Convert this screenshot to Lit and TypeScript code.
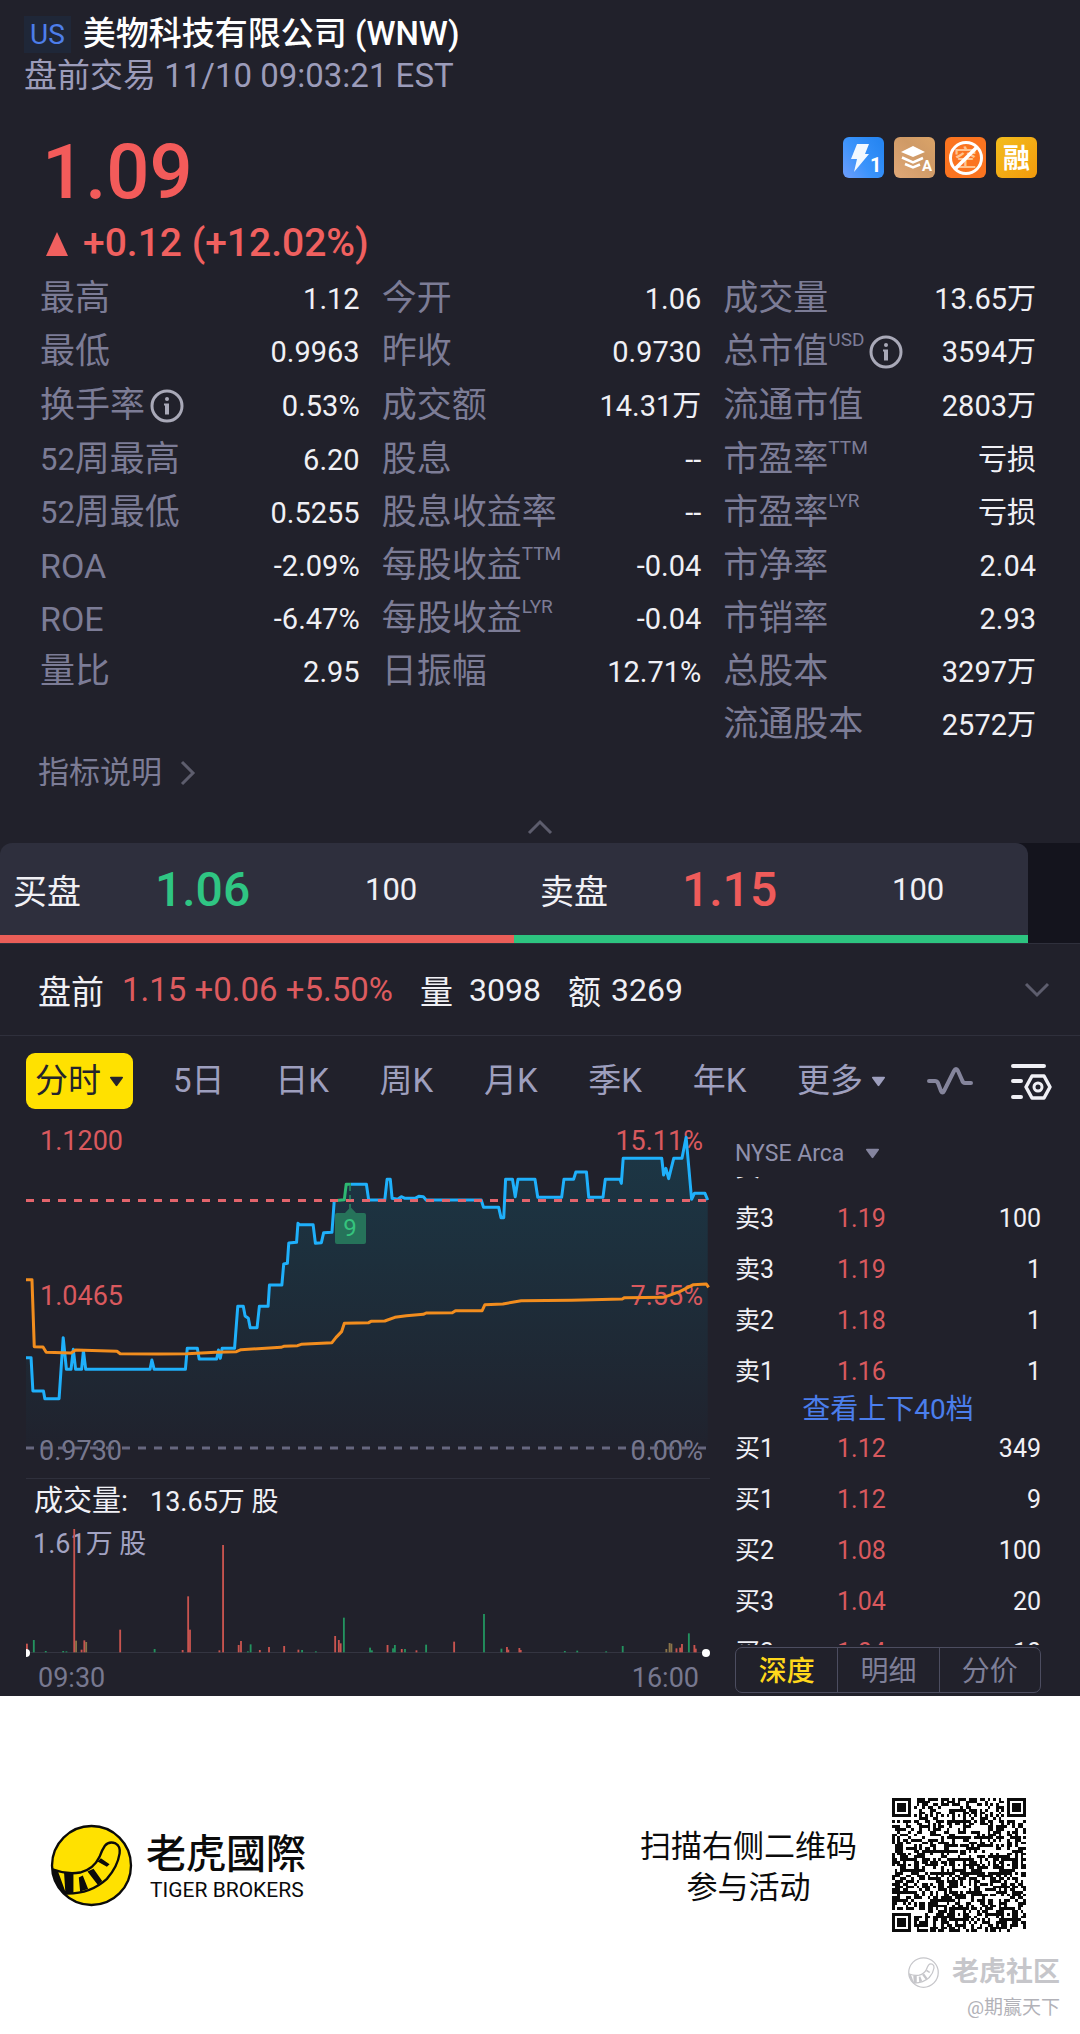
import { LitElement, html, svg, css, nothing } from "lit";
import { customElement, property, state } from "lit/decorators.js";
import { classMap } from "lit/directives/class-map.js";

interface Stat {
  label: string;
  value: string;
  prefix?: string;
  sup?: string;
  info?: boolean;
}

const STATS: Stat[][] = [
  [
    { label: "最高", value: "1.12" },
    { label: "最低", value: "0.9963" },
    { label: "换手率", value: "0.53%", info: true },
    { label: "周最高", prefix: "52", value: "6.20" },
    { label: "周最低", prefix: "52", value: "0.5255" },
    { label: "", prefix: "ROA", value: "-2.09%" },
    { label: "", prefix: "ROE", value: "-6.47%" },
    { label: "量比", value: "2.95" },
  ],
  [
    { label: "今开", value: "1.06" },
    { label: "昨收", value: "0.9730" },
    { label: "成交额", value: "14.31万" },
    { label: "股息", value: "--" },
    { label: "股息收益率", value: "--" },
    { label: "每股收益", sup: "TTM", value: "-0.04" },
    { label: "每股收益", sup: "LYR", value: "-0.04" },
    { label: "日振幅", value: "12.71%" },
  ],
  [
    { label: "成交量", value: "13.65万" },
    { label: "总市值", sup: "USD", info: true, value: "3594万" },
    { label: "流通市值", value: "2803万" },
    { label: "市盈率", sup: "TTM", value: "亏损" },
    { label: "市盈率", sup: "LYR", value: "亏损" },
    { label: "市净率", value: "2.04" },
    { label: "市销率", value: "2.93" },
    { label: "总股本", value: "3297万" },
    { label: "流通股本", value: "2572万" },
  ],
];

const PERIODS = ["5日", "日K", "周K", "月K", "季K", "年K"];

const ASKS = [
  ["卖4", "1.20", "1"],
  ["卖3", "1.19", "100"],
  ["卖3", "1.19", "1"],
  ["卖2", "1.18", "1"],
  ["卖1", "1.16", "1"],
];
const BIDS = [
  ["买1", "1.12", "349"],
  ["买1", "1.12", "9"],
  ["买2", "1.08", "100"],
  ["买3", "1.04", "20"],
  ["买3", "1.04", "10"],
];

// Intraday series, in plot units (x to the right, y downwards).
const PRICE_A =
  "57,773 68,773 72,873 95,873 98,896 129,896 138,713 145,808 155,808 160,748 165,808 178,808 182,752 187,808 327,808 331,780 336,808 404,808 408,745 430,745 434,777 472,777 476,750 480,775 484,745 511,745 518,619 530,619 534,648 541,655 545,683 560,683 565,619 584,619 587,555 614,555 618,492 626,490 629,429 646,427 649,370 652,374 682,374 687,430 700,428 705,398 723,397 728,302";
const PRICE_MARK = "728,302 750,299 754,253 764,253";
const PRICE_B =
  "764,253 798,253 803,300 838,300 843,238 850,238 854,295 866,298 874,290 882,295 904,295 912,289 922,290 928,300 1048,300 1053,322 1086,322 1091,353 1097,353 1101,238 1116,238 1122,290 1128,238 1165,238 1171,292 1223,292 1228,238 1249,238 1254,216 1277,216 1282,292 1313,292 1318,238 1350,238 1353,250 1357,175 1441,175 1445,225 1450,205 1456,236 1467,175 1485,175 1494,112 1506,298 1512,280 1535,280 1541,300";
const AVERAGE =
  "57,539 70,539 75,740 94,741 101,757 155,759 165,750 255,754 262,761 345,762 408,761 470,757 515,755 525,749 612,742 618,739 648,737 656,733 723,728 732,712 744,695 750,670 803,668 808,664 838,663 860,652 885,647 922,643 928,639 985,638 992,632 1050,632 1056,614 1095,612 1135,602 1245,601 1355,597 1360,593 1445,592 1480,575 1510,554 1538,552 1543,562";

// Volume bars: x, height, colour (r up, g down, o mixed).
const VOLUMES: [number, number, string][] = [
  [59, 26, "r"], [74, 37, "g"], [100, 4, "g"], [138, 4, "g"], [145, 3, "g"],
  [162, 370, "r"], [166, 35, "o"], [178, 8, "r"], [184, 36, "r"], [188, 31, "o"],
  [262, 68, "r"], [337, 10, "g"], [398, 7, "r"], [410, 168, "r"], [414, 68, "r"],
  [478, 6, "r"], [486, 322, "r"], [520, 22, "r"], [525, 34, "r"], [540, 3, "g"],
  [546, 24, "g"], [566, 7, "r"], [586, 16, "r"], [619, 19, "r"], [650, 8, "r"],
  [658, 7, "g"], [688, 3, "g"], [730, 49, "r"], [738, 37, "r"], [742, 27, "r"],
  [749, 104, "g"], [806, 14, "g"], [810, 6, "g"], [844, 22, "r"], [856, 12, "g"],
  [860, 22, "g"], [875, 10, "r"], [882, 10, "g"], [907, 6, "r"], [928, 23, "g"],
  [989, 32, "r"], [1054, 115, "g"], [1092, 11, "g"], [1104, 16, "r"], [1107, 8, "r"],
  [1131, 13, "r"], [1134, 7, "r"], [1230, 4, "g"], [1257, 5, "g"], [1320, 3, "g"],
  [1356, 19, "g"], [1451, 10, "o"], [1458, 28, "o"], [1462, 26, "o"], [1473, 12, "r"],
  [1481, 14, "r"], [1485, 25, "r"], [1500, 57, "g"], [1512, 22, "r"], [1515, 11, "r"],
];

// A 49-module code: finder, alignment and timing patterns around a seeded fill.
function codePath(): string {
  const n = 49;
  let seed = 20231110;
  const rand = () => {
    seed = (seed * 1103515245 + 12345) % 2147483648;
    return seed / 2147483648;
  };
  const ring = (dx: number, dy: number) => Math.max(Math.abs(dx), Math.abs(dy));
  const finders = [[3, 3], [n - 4, 3], [3, n - 4]];
  const aligns = [[24, 6], [6, 24], [24, 24], [42, 24], [24, 42], [42, 42]];
  let d = "";
  for (let y = 0; y < n; y++) {
    let run = 0;
    for (let x = 0; x <= n; x++) {
      let on = rand() < 0.53;
      if (x === 6 || y === 6) on = (x + y) % 2 === 0;
      for (const [cx, cy] of aligns) {
        const r = ring(x - cx, y - cy);
        if (r <= 2) on = r !== 1;
      }
      for (const [cx, cy] of finders) {
        const r = ring(x - cx, y - cy);
        if (r <= 4) on = r === 3 || r <= 1;
      }
      if (on && x < n) {
        run++;
      } else if (run) {
        d += `M${x - run} ${y}h${run}v1h-${run}z`;
        run = 0;
      }
    }
  }
  return d;
}
const CODE = codePath();

const infoIcon = html`<svg class="info" viewBox="0 0 34 34" aria-hidden="true">
  <circle cx="17" cy="17" r="15" fill="none" stroke="currentColor" stroke-width="3" />
  <circle cx="17" cy="10" r="2" fill="currentColor" />
  <path d="M14 14.5h5v11h-4v-9h-1z" fill="currentColor" />
</svg>`;

const triangle = (cls: string) => html`<svg class=${cls} viewBox="0 0 16 11" aria-hidden="true">
  <path d="M1 1.5q0-1 1-1h12q1 0 1 1L8.8 10q-.8 1-1.6 0z" fill="currentColor" />
</svg>`;

const tiger = (line: string, fill: string, width: number) => svg`
  <circle cx="184" cy="196" r="118" fill=${fill} stroke=${line} stroke-width=${width} />
  <path d="M70 208Q110 224 150 217Q190 208 208 170Q215 150 224 137Q236 122 256 130Q271 138 268 160Q262 200 230 236Q180 282 106 280"
    fill="none" stroke=${line} stroke-width=${width} stroke-linecap="round" />
  <path d="M66 206L84 214L108 280L96 278Q74 250 66 206z M102 217L130 219L130 279L106 279z M146 232L158 226L174 266L150 274z M172 214L190 206L216 242L203 254z M202 184L212 174L238 192L230 200z"
    fill=${line} />`;

@customElement("order-table")
class OrderTable extends LitElement {
  @property({ attribute: false }) rows: string[][] = [];

  static styles = css`
    :host { display: block; }
    .book { width: 100%; border-collapse: collapse; table-layout: fixed; font-size: 25px; line-height: 35px; }
    .cell { padding: 8px 0; font-weight: 400; text-align: left; }
    .level { color: #f0f0f5; }
    .price { color: #d9595e; }
    .size { color: #f0f0f5; text-align: right; }
  `;

  render() {
    return html`<table class="book">
      <tbody>
        ${this.rows.map(
          ([level, price, size]) => html`<tr>
            <th class="cell level" scope="row">${level}</th>
            <td class="cell price">${price}</td>
            <td class="cell size">${size}</td>
          </tr>`
        )}
      </tbody>
    </table>`;
  }
}

@customElement("intraday-chart")
class IntradayChart extends LitElement {
  static styles = css`
    :host { display: block; }
    .chart { display: block; width: 100%; height: auto; }
    .axis { font-size: 27px; fill: #d9595e; }
    .muted { fill: #77788f; }
    .bright { fill: #f0f0f5; }
    .head { font-size: 29px; }
    .soft { fill: #a3a3c2; }
    .end { text-anchor: end; }
    .mid { text-anchor: middle; }
    .badge { font-size: 24px; fill: #35c47d; }
    .line { fill: none; stroke-width: 3; stroke-linejoin: round; vector-effect: non-scaling-stroke; }
    .price { stroke: #1fb0fb; }
    .mark { stroke: #2eb872; }
    .avg { stroke: #f28d1e; }
    .dash { stroke-width: 3; stroke-dasharray: 8 8; }
    .r { fill: #c9544f; }
    .g { fill: #23935f; }
    .o { fill: #8a7449; }
  `;

  render() {
    return html`<svg class="chart" viewBox="0 0 684 576" role="img">
      <defs>
        <linearGradient id="shade" x1="0" y1="0" x2="0" y2="1">
          <stop offset="0" stop-color="#1c3746" />
          <stop offset="0.4" stop-color="#1d2f3c" />
          <stop offset="1" stop-color="#20222d" />
        </linearGradient>
      </defs>
      <svg x="0" y="0" width="684" height="360" viewBox="57 60 1489 1080" preserveAspectRatio="none">
        <polygon points="${PRICE_A} ${PRICE_MARK} ${PRICE_B} 1541,1044 57,1044" fill="url(#shade)" />
      </svg>
      <text class="axis" x="14" y="30">1.1200</text>
      <text class="axis end" x="677" y="30">15.11%</text>
      <text class="axis" x="14" y="185">1.0465</text>
      <text class="axis end" x="677" y="185">7.55%</text>
      <text class="axis muted" x="13" y="340">0.9730</text>
      <text class="axis muted end" x="677" y="340">0.00%</text>
      <svg x="0" y="0" width="684" height="360" viewBox="57 60 1489 1080" preserveAspectRatio="none">
        <polyline class="line price" points=${PRICE_A} />
        <polyline class="line price" points=${PRICE_B} />
        <polyline class="line mark" points=${PRICE_MARK} />
        <polyline class="line avg" points=${AVERAGE} />
      </svg>
      <line class="dash" x1="0" x2="682" y1="80.500" y2="80.500" stroke="#e3646c" />
      <line class="dash" x1="0" x2="682" y1="328" y2="328" stroke="#66677f" />
      <path d="M324 66V90" stroke="#2eb872" stroke-width="1" stroke-dasharray="5 4" />
      <path d="M311 93h8l5.500-6 5.500 6h8q2 0 2 2v27q0 2-2 2h-27q-2 0-2-2V95q0-2 2-2z" fill="#26735a" />
      <text class="badge mid" x="324" y="116">9</text>
      <path d="M0 358.500H684" stroke="#2f303c" />
      <text class="head bright" x="8" y="391">成交量:</text>
      <text class="axis bright" x="124" y="391">13.65万 股</text>
      <text class="axis soft" x="7" y="433">1.61万 股</text>
      <svg x="0" y="400" width="684" height="140" viewBox="57 240 1489 420" preserveAspectRatio="none">
        <rect x="57" y="636" width="1486" height="3" fill="#343541" />
        ${VOLUMES.map(
          ([x, h, c]) => svg`<rect class=${c} x=${x - 2} y=${637 - h} width="4" height=${h} />`
        )}
      </svg>
      <path d="M0 529a4 4 0 0 1 0 8z" fill="#fff" />
      <circle cx="680" cy="533" r="4" fill="#fff" />
      <text class="axis muted" x="12" y="567">09:30</text>
      <text class="axis muted end" x="673" y="567">16:00</text>
    </svg>`;
  }
}

@customElement("app-root")
class AppRoot extends LitElement {
  @state() private period = "分时";
  @state() private panel = "深度";

  static styles = css`
    :host {
      display: block;
      background: #21212b;
      color: #f0f0f5;
      font-family: Roboto, "Noto Sans CJK SC", sans-serif;
      font-size: 33px;
    }
    button, select { font: inherit; color: inherit; background: none; border: 0; padding: 0; margin: 0; }
    .flag-row { display: flex; align-items: center; gap: 12px; height: 40px; padding: 14px 24px 0; }
    .flag { padding: 0 6px; background: #1f2738; color: #4d7eea; font-size: 28px; line-height: 37px; }
    .name { margin: 0; font-size: 33px; font-weight: 500; line-height: 40px; color: #fff; }
    .session { margin: 0; padding: 0 24px; line-height: 44px; color: #9c9cba; }
    .quote { display: flex; align-items: flex-start; justify-content: space-between; padding: 31px 43px 0 42px; }
    .last { font-size: 76px; font-weight: 500; line-height: 86px; color: #f35b5a; }
    .change { display: flex; align-items: center; gap: 15px; padding: 0 46px; font-size: 39px; font-weight: 500; line-height: 57px; color: #f0605f; }
    .up { width: 22px; height: 24px; }
    .tags { display: flex; gap: 10px; padding-top: 8px; }
    .tag { width: 41px; height: 41px; }
    .tag-text { font-weight: 700; fill: #fff; }
    .stats {
      display: grid;
      grid-auto-flow: column;
      grid-template-columns: 319fr 319fr 312fr;
      column-gap: 22px;
      margin: 0;
      padding: 0 44px 0 40px;
    }
    .stat-col { display: grid; grid-template-rows: 53px 54px 54px; grid-auto-rows: 53px; align-content: start; margin: 0; }
    .stat { display: flex; align-items: center; justify-content: space-between; }
    .label { display: flex; align-items: center; font-size: 35px; line-height: 44px; color: #7c7c96; white-space: nowrap; }
    .digits { font-size: 31px; }
    .code { font-size: 34px; }
    .sup { align-self: flex-start; font-size: 19px; line-height: 20px; }
    .info { width: 34px; height: 34px; margin-left: 5px; color: #a9a9b8; }
    .value { margin: 0; font-size: 29px; line-height: 44px; white-space: nowrap; }
    .help { display: inline-flex; align-items: center; gap: 18px; padding: 0 38px; font-size: 31px; line-height: 44px; color: #7c7c96; text-decoration: none; }
    .chev { width: 16px; height: 26px; color: #5d5d6d; }
    .fold { display: flex; justify-content: center; width: 100%; height: 48px; padding-top: 24px; box-sizing: border-box; }
    .vee { width: 26px; height: 16px; color: #5d5d6d; }
    .sides { display: grid; grid-template-columns: 1fr 1fr; padding-right: 52px; background: linear-gradient(90deg, #21212b 50%, #14141d 50%); }
    .side { display: grid; grid-template-columns: 142px 210px 1fr; align-items: center; height: 92px; padding-left: 13px; background: #2e2f3d; border-bottom: 8px solid #ea5e58; }
    .side.bid { border-top-left-radius: 12px; }
    .side.ask { padding-left: 26px; border-top-right-radius: 12px; border-bottom-color: #2dc480; }
    .side-name { font-size: 34px; }
    .side-price { font-size: 48px; font-weight: 500; }
    .bid .side-price { color: #2fc583; }
    .ask .side-price { color: #ef5b5a; }
    .side-size { font-size: 31px; }
    .pre { display: flex; align-items: center; height: 91px; padding: 0 30px 0 38px; border: solid #2f303c; border-width: 1px 0; }
    .pre-move { margin-left: 18px; color: #dd5b5f; }
    .pre-vol { margin-left: 27px; }
    .pre-fig { margin-left: 16px; font-size: 32px; }
    .pre-amt { margin-left: 27px; }
    .pre-fig.near { margin-left: 10px; }
    .pre-open { margin-left: auto; display: flex; }
    .tabs { display: flex; align-items: center; padding: 17px 28px 11px 26px; color: #9e9fbe; }
    .tab { display: flex; align-items: center; gap: 8px; line-height: 56px; white-space: nowrap; }
    .tab.on { height: 56px; padding: 0 9px; border-radius: 9px; background: #ffe100; color: #24242c; }
    .periods { display: flex; flex: 1; justify-content: space-between; margin: 0 41px 0 40px; }
    .tri { width: 15px; height: 11px; }
    .wave { width: 46px; height: 32px; margin-right: 37px; display: block; color: #85859c; }
    .gear { width: 42px; height: 38px; display: block; color: #f0f0f5; }
    .market { display: grid; grid-template-columns: 1fr 306px; column-gap: 25px; padding: 0 39px 0 26px; }
    .depth { display: flex; flex-direction: column; padding: 16px 0 3px; }
    .venue { display: flex; align-items: center; gap: 20px; height: 34px; margin-bottom: 7px; color: #85859f; font-size: 23px; }
    .venue-pick { appearance: none; color: #9090ac; }
    .asks { display: flex; flex-direction: column; justify-content: flex-end; height: 220px; overflow: hidden; }
    .more { align-self: center; font-size: 28px; line-height: 26px; color: #4b7eec; text-decoration: none; }
    .bids { flex: 1 1 0; min-height: 0; overflow: hidden; }
    .modes { display: grid; grid-template-columns: repeat(3, 1fr); height: 46px; margin-top: 2px; box-sizing: border-box; border: 1px solid #4c4d60; border-radius: 7px; }
    .mode { padding-top: 4px; font-size: 28px; line-height: 40px; color: #7e7f98; }
    .mode + .mode { border-left: 1px solid #4c4d60; }
    .mode.on { color: #ffd81c; font-weight: 500; }
    .foot { position: relative; display: flex; align-items: center; min-height: 338px; box-sizing: border-box; padding: 0 54px 0 50px; background: #fff; color: #0b0b0b; }
    .logo { width: 83px; height: 83px; }
    .brand { display: flex; flex-direction: column; margin-left: 13px; padding-top: 6px; font-family: Roboto, "Noto Sans CJK TC", sans-serif; }
    .brand-name { font-size: 40px; font-weight: 500; line-height: 44px; }
    .brand-sub { padding-left: 4px; font-size: 21px; line-height: 26px; }
    .invite { margin: 0 35px 0 auto; padding-top: 4px; font-size: 31px; line-height: 41px; text-align: center; }
    .qr { width: 134px; height: 134px; }
    .stamp { position: absolute; right: 20px; bottom: 10px; display: flex; flex-direction: column; align-items: flex-end; color: #c6c6ca; }
    .stamp-row { display: flex; align-items: center; gap: 13px; font-size: 27px; font-weight: 700; line-height: 40px; }
    .stamp-logo { width: 31px; height: 31px; }
    .stamp-user { font-size: 19px; line-height: 32px; color: #b2b2b8; }
  `;

  private stat(s: Stat) {
    return html`<div class="stat">
      <dt class="label">
        ${s.prefix
          ? html`<span class=${s.label ? "digits" : "code"}>${s.prefix}</span>`
          : nothing}${s.label}${s.sup ? html`<span class="sup">${s.sup}</span>` : nothing}${s.info
          ? infoIcon
          : nothing}
      </dt>
      <dd class="value">${s.value}</dd>
    </div>`;
  }

  private tags() {
    return html`<div class="tags">
      <svg class="tag" viewBox="0 0 41 41">
        <defs>
          <linearGradient id="b1" x1="0" y1="1" x2="1" y2="0.300">
            <stop offset="0" stop-color="#6f9dfb" />
            <stop offset="0.500" stop-color="#3a93fb" />
            <stop offset="1" stop-color="#2786f2" />
          </linearGradient>
        </defs>
        <rect width="41" height="41" rx="6" fill="url(#b1)" />
        <path d="M14 7h12l-4 10h4L11 35l3-13H8z" fill="#f2f8ff" />
        <text class="tag-text" x="27" y="35" font-size="20">1</text>
      </svg>
      <svg class="tag" viewBox="0 0 41 41">
        <defs>
          <linearGradient id="b2" x1="0" y1="1" x2="1" y2="0">
            <stop offset="0" stop-color="#e0a878" />
            <stop offset="0.600" stop-color="#cf9a66" />
            <stop offset="1" stop-color="#dba468" />
          </linearGradient>
        </defs>
        <rect width="41" height="41" rx="6" fill="url(#b2)" />
        <path d="M19 9l12 6-12 5-12-5z" fill="#fff" />
        <path d="M8 20.500l11 5 10-4.500M11 27l8 3.500 7-3" fill="none" stroke="#fff" stroke-width="2.500" />
        <text class="tag-text" x="28" y="34" font-size="15">A</text>
      </svg>
      <svg class="tag" viewBox="0 0 41 41">
        <rect width="41" height="41" rx="6" fill="#fb7420" />
        <text x="9" y="29" font-size="23" font-weight="500" fill="#ffc390">空</text>
        <circle cx="21" cy="21" r="15.500" fill="none" stroke="#fff" stroke-width="3" />
        <path d="M10 32L32 10" stroke="#fff" stroke-width="3.500" />
      </svg>
      <svg class="tag" viewBox="0 0 41 41">
        <defs>
          <linearGradient id="b4" x1="0" y1="0" x2="1" y2="1">
            <stop offset="0" stop-color="#f3bd1d" />
            <stop offset="1" stop-color="#f29a0c" />
          </linearGradient>
        </defs>
        <rect width="41" height="41" rx="6" fill="url(#b4)" />
        <text class="tag-text" x="7" y="31" font-size="27">融</text>
      </svg>
    </div>`;
  }

  render() {
    return html`
      <header>
        <div class="flag-row">
          <span class="flag">US</span>
          <h1 class="name">美物科技有限公司 (WNW)</h1>
        </div>
        <p class="session">盘前交易 11/10 09:03:21 EST</p>
      </header>
      <section>
        <div class="quote">
          <div class="last">1.09</div>
          ${this.tags()}
        </div>
        <div class="change">
          <svg class="up" viewBox="0 0 22 24"><path d="M11 0l11 24H0z" fill="currentColor" /></svg>
          <span>+0.12 (+12.02%)</span>
        </div>
        <div class="stats">
          ${STATS.map((col) => html`<dl class="stat-col">${col.map((s) => this.stat(s))}</dl>`)}
        </div>
        <a class="help" href="#">
          指标说明
          <svg class="chev" viewBox="0 0 16 26"><path d="M2 2l11 11L2 24" fill="none" stroke="currentColor" stroke-width="3" /></svg>
        </a>
        <button class="fold" aria-label="收起">
          <svg class="vee" viewBox="0 0 26 16"><path d="M2 14L13 3l11 11" fill="none" stroke="currentColor" stroke-width="3" /></svg>
        </button>
      </section>
      <section class="sides">
        <div class="side bid">
          <span class="side-name">买盘</span><span class="side-price">1.06</span><span class="side-size">100</span>
        </div>
        <div class="side ask">
          <span class="side-name">卖盘</span><span class="side-price">1.15</span><span class="side-size">100</span>
        </div>
      </section>
      <section class="pre">
        <span>盘前</span>
        <span class="pre-move">1.15 +0.06 +5.50%</span>
        <span class="pre-vol">量</span><span class="pre-fig">3098</span>
        <span class="pre-amt">额</span><span class="pre-fig near">3269</span>
        <button class="pre-open" aria-label="展开">
          <svg class="vee" viewBox="0 0 26 16"><path d="M2 2l11 11L24 2" fill="none" stroke="currentColor" stroke-width="3" /></svg>
        </button>
      </section>
      <nav class="tabs">
        <button class=${classMap({ tab: true, on: this.period === "分时" })} @click=${() => (this.period = "分时")}>
          分时${triangle("tri")}
        </button>
        <div class="periods">
          ${PERIODS.map(
            (p) => html`<button class=${classMap({ tab: true, on: this.period === p })} @click=${() => (this.period = p)}>${p}</button>`
          )}
          <button class="tab">更多${triangle("tri")}</button>
        </div>
        <button aria-label="指标">
          <svg class="wave" viewBox="0 0 46 32">
            <path d="M2 16h6q2 0 3 2l3 8q1.500 3 3 0L27 6q2-4 4 0l4 9q1 3 3 3h6" fill="none" stroke="currentColor" stroke-width="4" stroke-linecap="round" stroke-linejoin="round" />
          </svg>
        </button>
        <button aria-label="设置">
          <svg class="gear" viewBox="0 0 42 38">
            <path d="M3 4h31M3 19h8M3 35h8" fill="none" stroke="currentColor" stroke-width="4" stroke-linecap="round" />
            <path d="M22 14h12l6 11-6 11H22l-6-11z" fill="none" stroke="currentColor" stroke-width="3.500" stroke-linejoin="round" />
            <circle cx="28" cy="25" r="4" fill="none" stroke="currentColor" stroke-width="3" />
          </svg>
        </button>
      </nav>
      <section class="market">
        <intraday-chart></intraday-chart>
        <div class="depth">
          <label class="venue">
            <select class="venue-pick" aria-label="交易所"><option>NYSE Arca</option></select>
            ${triangle("tri")}
          </label>
          <div class="asks"><order-table .rows=${ASKS}></order-table></div>
          <a class="more" href="#">查看上下40档</a>
          <div class="bids"><order-table .rows=${BIDS}></order-table></div>
          <div class="modes">
            ${["深度", "明细", "分价"].map(
              (m) => html`<button class=${classMap({ mode: true, on: this.panel === m })} @click=${() => (this.panel = m)}>${m}</button>`
            )}
          </div>
        </div>
      </section>
      <footer class="foot">
        <svg class="logo" viewBox="60 72 248 248">${tiger("#0b0b0b", "#ffe100", 7)}</svg>
        <div class="brand">
          <span class="brand-name">老虎國際</span>
          <span class="brand-sub">TIGER BROKERS</span>
        </div>
        <div class="invite">扫描右侧二维码<br />参与活动</div>
        <svg class="qr" viewBox="0 0 49 49" role="img"><path d=${CODE} fill="#0b0b0b" shape-rendering="crispEdges" /></svg>
        <div class="stamp">
          <div class="stamp-row">
            <svg class="stamp-logo" viewBox="60 72 248 248">${tiger("#c6c6ca", "none", 10)}</svg>
            <span>老虎社区</span>
          </div>
          <span class="stamp-user">@期赢天下</span>
        </div>
      </footer>
    `;
  }
}
